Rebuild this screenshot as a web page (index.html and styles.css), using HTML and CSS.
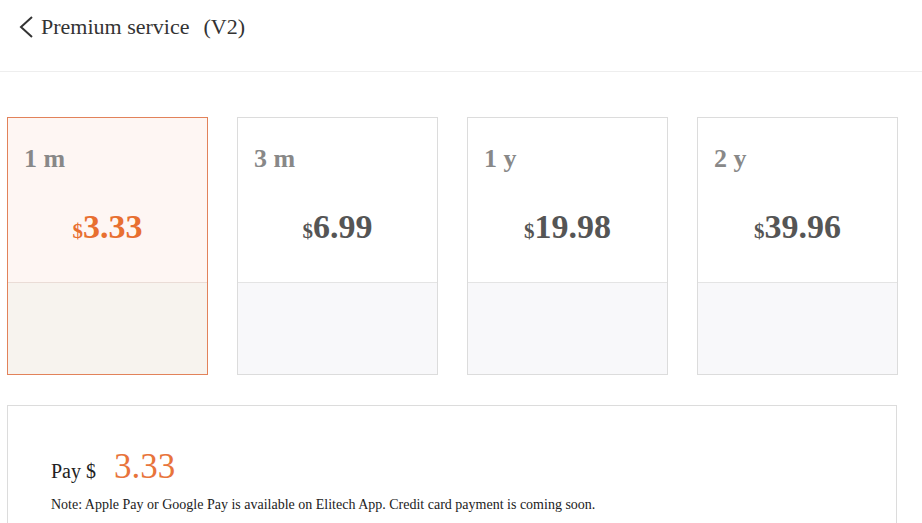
FILE: index.html
```html
<!DOCTYPE html>
<html lang="en">
<head>
  <meta charset="UTF-8">
  <meta name="viewport" content="width=device-width, initial-scale=1.0">
  <title>Premium service</title>
  <link rel="stylesheet" href="styles.css">
</head>
<body>

<div class="header">
  <svg class="back" width="16" height="24" viewBox="0 0 16 24">
    <path d="M14 2 L3 12 L14 22" fill="none" stroke="#333" stroke-width="2"/>
  </svg>
  <span class="title">Premium service</span><span class="version">(V2)</span>
</div>

<div class="plans">
  <div class="plan selected">
    <div class="plan-top">
      <div class="plan-name">1 m</div>
      <div class="plan-price"><span class="cur">$</span>3.33</div>
    </div>
    <div class="plan-bottom"></div>
  </div>
  <div class="plan">
    <div class="plan-top">
      <div class="plan-name">3 m</div>
      <div class="plan-price"><span class="cur">$</span>6.99</div>
    </div>
    <div class="plan-bottom"></div>
  </div>
  <div class="plan">
    <div class="plan-top">
      <div class="plan-name">1 y</div>
      <div class="plan-price"><span class="cur">$</span>19.98</div>
    </div>
    <div class="plan-bottom"></div>
  </div>
  <div class="plan">
    <div class="plan-top">
      <div class="plan-name">2 y</div>
      <div class="plan-price"><span class="cur">$</span>39.96</div>
    </div>
    <div class="plan-bottom"></div>
  </div>
</div>

<div class="pay-box">
  <div class="pay-line">Pay $ <span class="pay-amount">3.33</span></div>
  <div class="note">Note: Apple Pay or Google Pay is available on Elitech App. Credit card payment is coming soon.</div>
</div>

</body>
</html>
```

FILE: styles.css
```css
body {
  margin: 0;
  font-family: "Liberation Serif", serif;
  color: #222;
  background: #fff;
  overflow: hidden;
}

.header {
  height: 72px;
  border-bottom: 1px solid #eeeeee;
  display: flex;
  align-items: center;
  padding-left: 18px;
  box-sizing: border-box;
}

.back {
  margin-right: 7px;
  margin-top: -18px;
}

.title,
.version {
  font-size: 22px;
  color: #333;
  margin-top: -18px;
}

.version {
  margin-left: 14px;
}

.plans {
  display: flex;
  gap: 29px;
  padding-left: 7px;
  margin-top: 45px;
}

.plan {
  width: 201px;
  height: 258px;
  box-sizing: border-box;
  border: 1px solid #dcdcdc;
  display: flex;
  flex-direction: column;
  background: #fff;
}

.plan-top {
  height: 165px;
  border-bottom: 1px solid #e4e4e4;
  padding: 26px 0 0 16px;
  box-sizing: border-box;
}

.plan-bottom {
  flex: 1;
  background: #f8f8fa;
}

.plan-name {
  font-size: 26px;
  font-weight: bold;
  color: #888;
  line-height: 30px;
}

.plan-price {
  margin-top: 34px;
  margin-left: -16px;
  text-align: center;
  font-size: 34px;
  font-weight: bold;
  color: #555;
  line-height: 38px;
}

.plan-price .cur {
  font-size: 21px;
}

.plan.selected {
  border-color: #e2825a;
  background: #fef6f3;
}

.plan.selected .plan-top {
  border-bottom-color: #eadcd6;
}

.plan.selected .plan-bottom {
  background: #f7f3ee;
}

.plan.selected .plan-price {
  color: #e86f30;
}

.pay-box {
  margin: 30px 0 0 7px;
  width: 890px;
  height: 160px;
  box-sizing: border-box;
  border: 1px solid #dcdcdc;
  padding: 41px 0 0 43px;
}

.pay-line {
  font-size: 20px;
  color: #222;
  line-height: 40px;
}

.pay-amount {
  font-size: 35px;
  color: #e8743b;
  margin-left: 13px;
}

.note {
  font-size: 14px;
  color: #222;
  margin-top: 6px;
}
```
